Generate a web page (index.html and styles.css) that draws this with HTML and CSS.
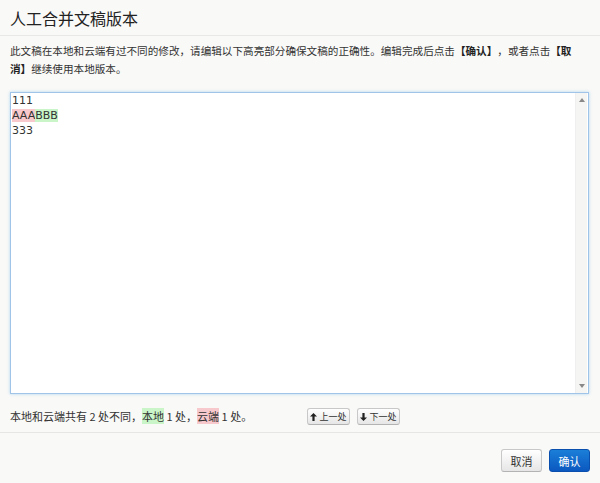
FILE: index.html
```html
<!DOCTYPE html>
<html lang="zh-CN">
<head>
    <meta charset="UTF-8">
    <meta name="viewport" content="width=device-width, initial-scale=1.0">
    <title>人工合并文稿版本</title>
    <link rel="stylesheet" href="styles.css">
</head>
<body>
    <div class="modal">
        <div class="modal-header">
            <h3>人工合并文稿版本</h3>
        </div>

        <div class="modal-body">
            <p class="intro">此文稿在本地和云端有过不同的修改，请编辑以下高亮部分确保文稿的正确性。编辑完成后点击<b>【确认】</b>，或者点击<b>【取消】</b>继续使用本地版本。</p>

            <div class="editor-box">
                <div class="editor" contenteditable="true">
                    <div>111</div>
                    <div><span class="mark-remote">AAA</span><span class="mark-local">BBB</span></div>
                    <div>333</div>
                </div>
                <div class="scrollbar">
                    <span class="arrow arrow-up"></span>
                    <span class="arrow arrow-down"></span>
                </div>
            </div>

            <div class="status-row">
                <span class="status-text">本地和云端共有 2 处不同，<span class="mark-local">本地</span> 1 处，<span class="mark-remote">云端</span> 1 处。</span>
                <button class="btn btn-mini">
                    <svg width="7" height="8" viewBox="0 0 7 8"><path d="M3.5 0 L7 3.6 H4.6 V8 H2.4 V3.6 H0 Z" fill="#222"/></svg>上一处
                </button>
                <button class="btn btn-mini">
                    <svg width="7" height="8" viewBox="0 0 7 8"><path d="M3.5 8 L7 4.4 H4.6 V0 H2.4 V4.4 H0 Z" fill="#222"/></svg>下一处
                </button>
            </div>
        </div>

        <div class="modal-footer">
            <button class="btn">取消</button>
            <button class="btn btn-primary">确认</button>
        </div>
    </div>
</body>
</html>
```

FILE: styles.css
```css
/* General Styles */
body {
    margin: 0;
    background-color: #f9f9f7;
    font-family: "Noto Sans CJK SC", "Noto Sans", sans-serif;
    color: #333;
    text-spacing-trim: space-all; /* keep full-width punctuation apart */
}

.modal {
    width: 600px;
    height: 483px;
    display: flex;
    flex-direction: column;
}

.modal-header {
    height: 35px;
    padding: 0 10px;
    display: flex;
    align-items: center;
    border-bottom: 1px solid #e8e8e6;
}

.modal-header h3 {
    margin: 0;
    font-size: 16px;
    font-weight: normal;
    color: #222;
}

.modal-body {
    padding: 0 10px;
}

.intro {
    margin: 6px 0 0;
    font-size: 10.6px;
    line-height: 18px;
    color: #333;
}

.intro b {
    color: #222;
}

/* Editor with highlighted diffs */
.editor-box {
    margin-top: 14px;
    height: 300px;
    width: 577px;
    display: flex;
    background-color: #fff;
    border: 1px solid #9fc4e7;
    box-shadow: 0 0 3px rgba(82, 168, 236, 0.45);
}

.editor {
    flex: 1;
    padding: 0 1px;
    font-family: "DejaVu Sans", sans-serif;
    font-size: 11px;
    line-height: 15px;
    color: #333;
    outline: none;
}

.mark-remote {
    background-color: #f8c9cc;
}

.mark-local {
    background-color: #c9f5c9;
}

.scrollbar {
    width: 11px;
    margin: 0 1px 0 0;
    background-color: #f5f5f4;
    border-left: 1px solid #efefef;
    display: flex;
    flex-direction: column;
    justify-content: space-between;
    align-items: center;
    padding: 5px 0;
}

.arrow {
    width: 0;
    height: 0;
    border-left: 3px solid transparent;
    border-right: 3px solid transparent;
}

.arrow-up {
    border-bottom: 4px solid #888;
}

.arrow-down {
    border-top: 4px solid #888;
}

/* Status row under the editor */
.status-row {
    margin-top: 10px;
    height: 23px;
    display: flex;
    align-items: center;
}

.status-text {
    width: 297px;
    font-size: 11px;
    color: #333;
}

/* Buttons */
.btn {
    font-family: "Noto Sans CJK SC", "Noto Sans", sans-serif;
    background-image: linear-gradient(#ffffff, #e6e6e6);
    border: 1px solid #c8c8c8;
    border-bottom-color: #b3b3b3;
    border-radius: 3px;
    color: #333;
    cursor: pointer;
    padding: 0;
}

.btn-mini {
    height: 17px;
    width: 43px;
    margin-right: 7px;
    font-size: 9px;
    display: flex;
    align-items: center;
    justify-content: center;
    gap: 2px;
    margin-top: 2px;
}

.modal-footer {
    margin-top: 5px;
    border-top: 1px solid #e6e6e4;
    padding: 16px 10px 0;
    display: flex;
    justify-content: flex-end;
    gap: 7px;
}

.modal-footer .btn {
    width: 41px;
    height: 23px;
    font-size: 11px;
}

.btn-primary {
    background-image: linear-gradient(#1b7fd8, #0b58c0);
    border-color: #0a4fae;
    color: #fff;
}
```
